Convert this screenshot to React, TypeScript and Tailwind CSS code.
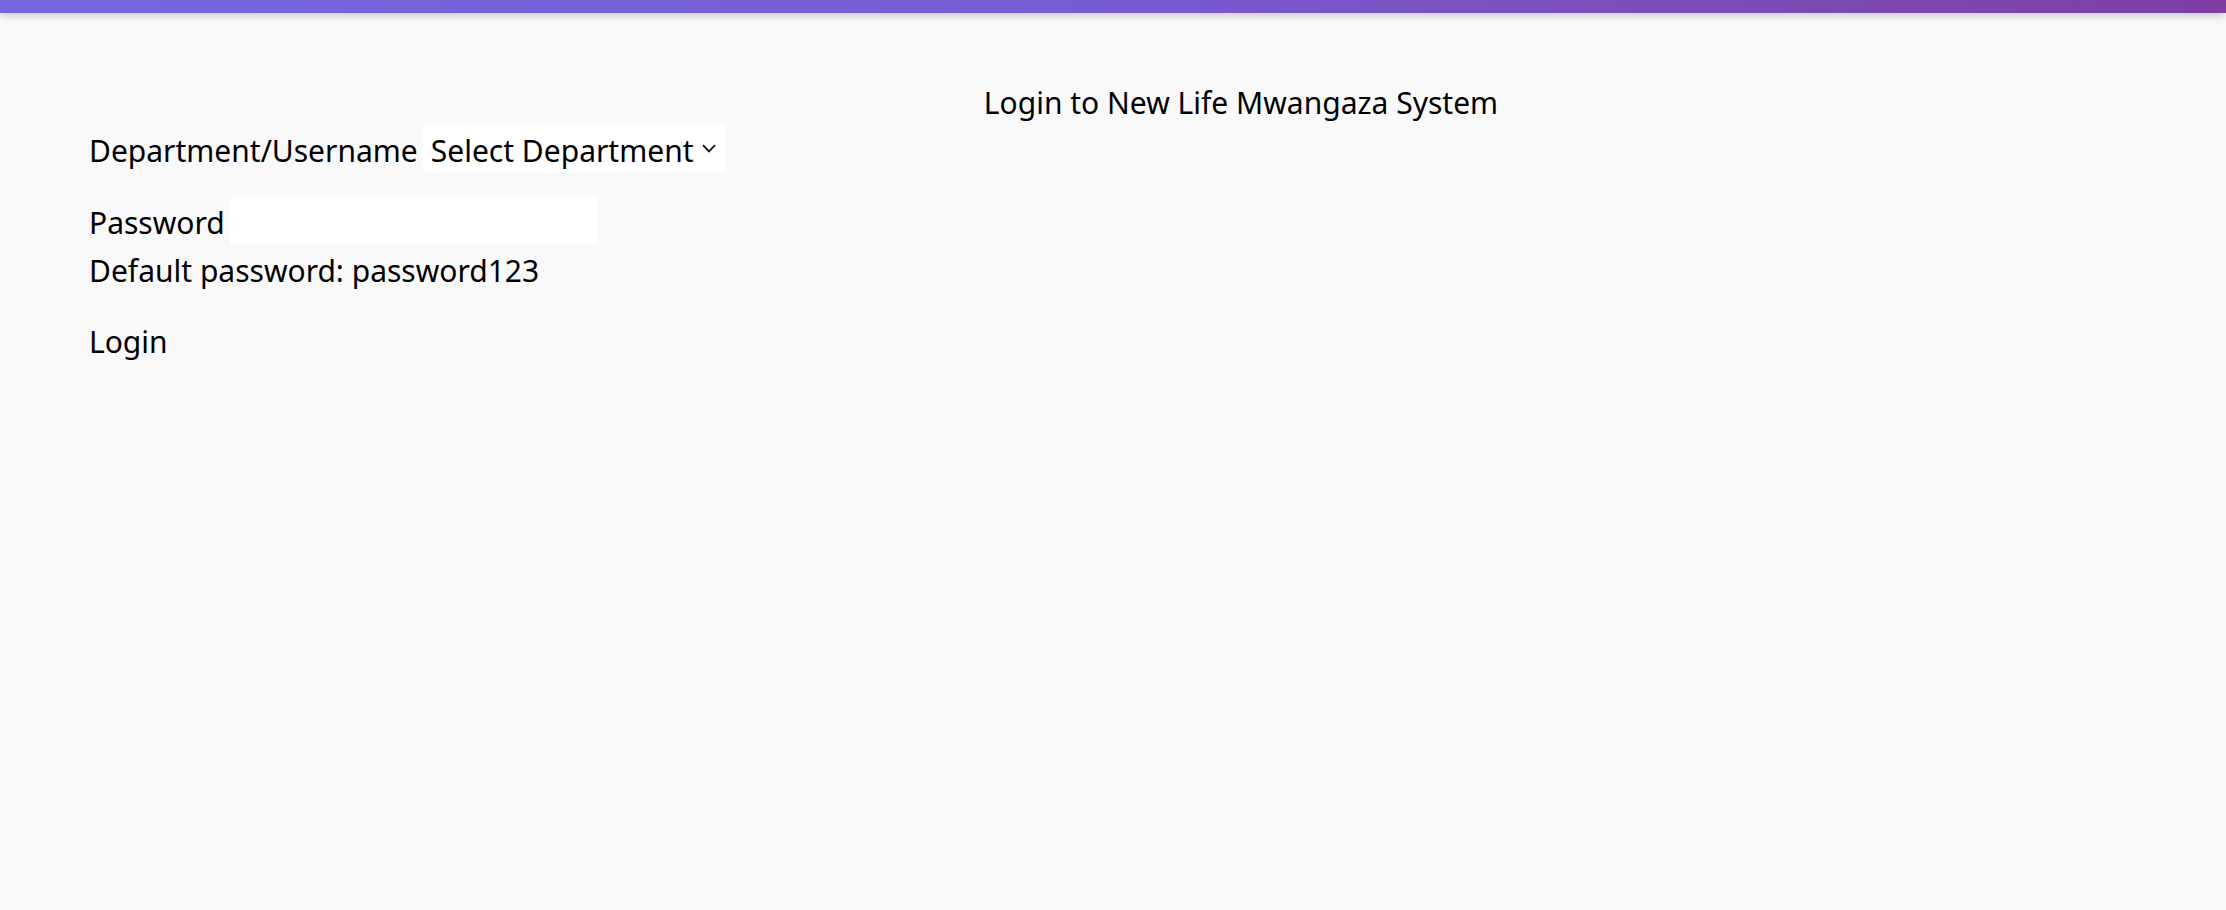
import React from 'react';

const font = "font-['Noto_Sans',sans-serif] text-[30px] text-black";

const App: React.FC = () => {
    return (
        <div className={`min-h-[910px] bg-[#f9f9f9] ${font}`}>
            {/* top accent bar */}
            <div className="relative z-10 h-[13px] bg-gradient-to-r from-[#7468dd] via-[#775bd1] to-[#7e3ea2] shadow-[0_2px_10px_rgba(0,0,0,0.22)]"></div>

            <div className="pt-[69px]">
                <h1 className="pl-[256px] text-center font-normal leading-[41px] h-[41px]">
                    Login to New Life Mwangaza System
                </h1>

                <form className="pl-[89px]" onSubmit={(e) => e.preventDefault()}>
                    <div className="mt-[2px] flex h-[47px] gap-[5px]">
                        <label className="pt-[4px] leading-[43px]">Department/Username</label>
                        <div className="flex w-[302px] items-stretch bg-white">
                            <select className="min-w-0 flex-1 appearance-none pl-[8px] pt-[4px] leading-[43px] outline-none">
                                <option>Select Department</option>
                            </select>
                            <svg className="mr-[9px] mt-[19px] h-[9px] w-[14px] shrink-0" viewBox="0 0 14 9" fill="none">
                                <polyline points="1,1.2 7,7.4 13,1.2" stroke="#111" strokeWidth="1.8" />
                            </svg>
                        </div>
                    </div>

                    <div className="mt-[25px] flex h-[47px] gap-[5px]">
                        <label className="pt-[4px] leading-[43px]">Password</label>
                        <input type="password" className="w-[367px] bg-white px-[6px] outline-none" />
                    </div>

                    <div className="mt-[6px] leading-[41px]">Default password: password123</div>

                    <button type="submit" className="mt-[30px] block leading-[41px]">
                        Login
                    </button>
                </form>
            </div>
        </div>
    );
};

export default App;
